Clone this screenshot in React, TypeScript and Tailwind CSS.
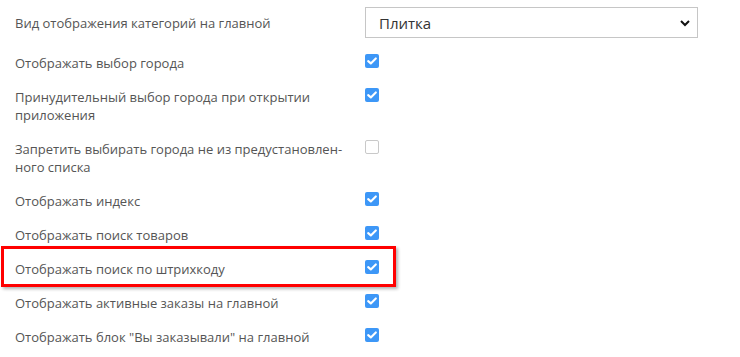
import React from "react";

type Row = { label: React.ReactNode; checked: boolean; marked?: boolean };

const rows: Row[] = [
  { label: "Отображать выбор города", checked: true },
  { label: "Принудительный выбор города при открытии приложения", checked: true },
  {
    label: (
      <>
        Запретить выбирать города не из предустановлен-
        <br />
        ного списка
      </>
    ),
    checked: false,
  },
  { label: "Отображать индекс", checked: true },
  { label: "Отображать поиск товаров", checked: true },
  { label: "Отображать поиск по штрихкоду", checked: true, marked: true },
  { label: "Отображать активные заказы на главной", checked: true },
  { label: 'Отображать блок "Вы заказывали" на главной', checked: true },
];

function Checkbox({ checked }: { checked: boolean }) {
  if (!checked) {
    return <span className="block h-[14px] w-[14px] rounded-[2px] border border-[#c9c9c9] bg-white" />;
  }
  return (
    <span className="flex h-[14px] w-[14px] items-center justify-center rounded-[2px] bg-[#3d97f7]">
      <svg width="10" height="8" viewBox="0 0 10 8" fill="none">
        <path d="M1.2 4.1 L3.8 6.4 L8.8 1.4" stroke="white" strokeWidth="2.1" strokeLinecap="round" strokeLinejoin="round" />
      </svg>
    </span>
  );
}

export default function App() {
  return (
    <div className="h-[357px] w-[740px] overflow-hidden bg-white font-['Open_Sans',sans-serif] text-[13px] leading-[18px] text-[#555]">
      <div className="flex items-center pt-[7px] pb-2 pl-[15px]">
        <div className="w-[335px]">Вид отображения категорий на главной</div>
        <div className="ml-[15px] flex h-[31px] w-[333px] items-center justify-between border border-[#c6c6c6] bg-white pl-[13px] pr-[6px] text-[15px] text-[#333]">
          <span>Плитка</span>
          <svg width="12" height="8" viewBox="0 0 12 8" fill="none">
            <path d="M2 2 L6 6 L10 2" stroke="#111" strokeWidth="2" />
          </svg>
        </div>
      </div>
      {rows.map((r, i) => (
        <div key={i} className="relative flex items-start py-2 pl-[15px]">
          <div className="w-[335px]">{r.label}</div>
          <div className="ml-[15px]">
            <Checkbox checked={r.checked} />
          </div>
          {r.marked && (
            <div className="absolute -top-[6px] left-[1px] h-[41px] w-[395px] border-[3px] border-[#ff0000] shadow-[2px_2px_3px_rgba(0,0,0,0.3)]" />
          )}
        </div>
      ))}
    </div>
  );
}
